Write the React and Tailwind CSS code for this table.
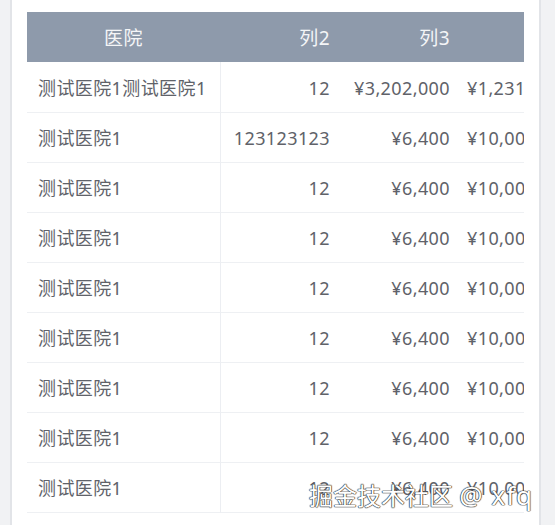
import React from 'react';

const rows = [
  { name: '测试医院1测试医院1', c2: '12', c3: '¥3,202,000', c4: '¥1,231,000' },
  { name: '测试医院1', c2: '123123123', c3: '¥6,400', c4: '¥10,000,00' },
  ...Array.from({ length: 7 }, () => ({ name: '测试医院1', c2: '12', c3: '¥6,400', c4: '¥10,000,00' })),
];

const App = () => {
  return (
    <div
      className="relative w-[555px] h-[525px] bg-[#f1f2f4] overflow-hidden"
      style={{ fontFamily: '"Noto Sans", "Noto Sans CJK SC", sans-serif' }}
    >
      <div className="ml-[10px] w-[531px] h-full bg-white border-x-[2px] border-[#e2e4e8] pt-[12px] pl-[15px]">
        {/* Table */}
        <div className="w-[497px] overflow-hidden">
          <table className="table-fixed border-collapse w-[613px] text-[18px] tracking-[0.4px]">
            <colgroup>
              <col className="w-[193px]" />
              <col className="w-[120px]" />
              <col className="w-[120px]" />
              <col className="w-[180px]" />
            </colgroup>
            <thead className="bg-[#8e9aab] text-[#f4f5f7] text-[19px]">
              <tr className="h-[50px]">
                <th className="font-normal text-center pt-[2px]">医院</th>
                <th className="font-normal text-right pr-[10px] pt-[2px]">列2</th>
                <th className="font-normal text-right pr-[10px] pt-[2px]">列3</th>
                <th className="font-normal text-right pr-[10px] pt-[2px]">列4</th>
              </tr>
            </thead>
            <tbody className="text-[#606269]">
              {rows.map((r, i) => (
                <tr key={i} className="h-[50px] border-b border-[#eef0f3]">
                  <td className="pl-[11px] pt-[3px] whitespace-nowrap border-r border-[#eceef2]">{r.name}</td>
                  <td className="text-right pr-[10px] pt-[3px]">{r.c2}</td>
                  <td className="text-right pr-[10px] pt-[3px]">{r.c3}</td>
                  <td className="pl-[7px] pt-[3px] whitespace-nowrap">{r.c4}</td>
                </tr>
              ))}
            </tbody>
          </table>
        </div>
      </div>

      {/* watermark */}
      <div className="absolute left-[309px] top-[479px] text-[24px] leading-[32px] text-white whitespace-nowrap [text-shadow:0_0_1px_#333,0_0_1px_#333,0_0_1px_#333,0_0_1px_#333]">
        掘金技术社区 <span className="text-[26px] tracking-[1px]">@ xfq</span>
      </div>
    </div>
  );
};

export default App;
